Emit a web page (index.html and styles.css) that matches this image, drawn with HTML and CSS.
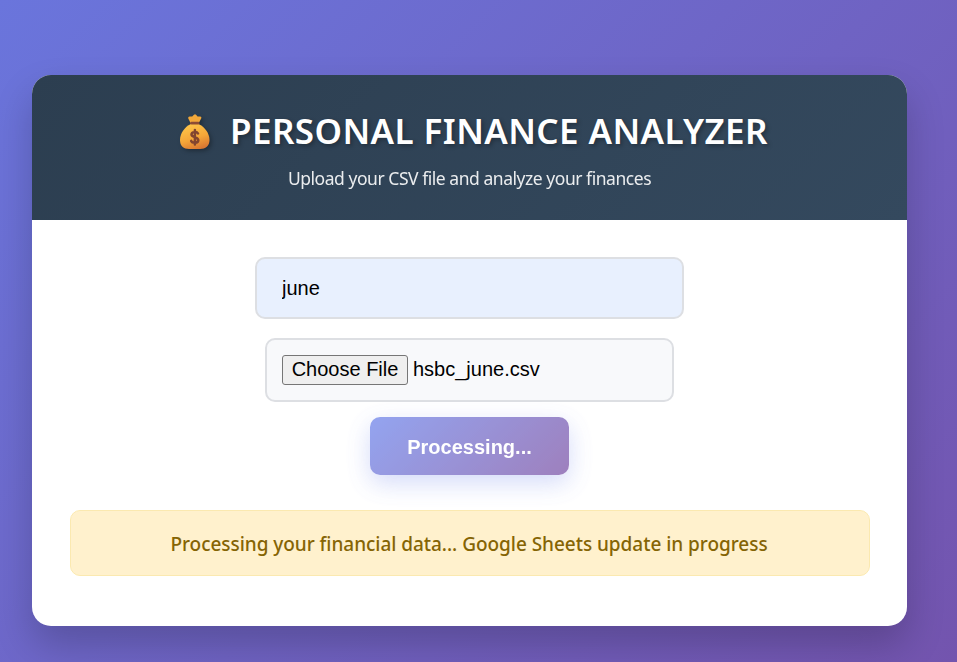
FILE: index.html
```
<!DOCTYPE html>
<html lang="en">
<head>
<meta charset="utf-8">
<title>Personal Finance Analyzer</title>
<link rel="stylesheet" href="styles.css">
</head>
<body>
<main class="card">
  <header class="header">
    <h1 class="title">
      <svg class="bag" viewBox="0 0 34 40" aria-hidden="true">
        <defs>
          <linearGradient id="sack" x1="0.2" y1="0" x2="0.6" y2="1">
            <stop offset="0" stop-color="#ffc84b"/>
            <stop offset="0.6" stop-color="#f5a638"/>
            <stop offset="1" stop-color="#d97832"/>
          </linearGradient>
        </defs>
        <path fill="#f2a83a" d="M12.5 10 L10.2 5.2 Q9.900 3.800 11.600 3.600 L14.2 3.4 L16 1.7 Q17 1 18 1.7 L19.6 3.4 L22.200 3.600 Q23.900 3.900 23.300 5.300 L20.8 10 Z"/>
        <path fill="url(#sack)" d="M12.8 11 H20.5 C27 14 31.5 20.5 31.5 27 C31.5 33 27.5 36 22 36 H11 C5.500 36 2 33 2 27 C2 20.500 6.500 14 12.800 11 Z"/>
        <rect x="12.200" y="8.800" width="9.200" height="2.800" rx="1.400" fill="#8d4c35"/>
        <path fill="none" stroke="#82452f" stroke-width="2.500" stroke-linecap="round" d="M20 20.500 C19 18.500 13.500 18.500 13.500 21.500 C13.500 24.700 20.300 23.600 20.300 27.200 C20.300 30.400 14.200 30.300 13.200 27.900 M16.900 17 V31.500"/>
      </svg>
      <span class="title-text">PERSONAL FINANCE ANALYZER</span>
    </h1>
    <p class="subtitle">Upload your CSV file and analyze your finances</p>
  </header>
  <section class="content">
    <input class="month" type="text" value="june" aria-label="Month">
    <div class="file">
      <button class="choose" type="button">Choose File</button>
      <span>hsbc_june.csv</span>
    </div>
    <button class="submit" type="button">Processing...</button>
    <p class="status">Processing your financial data... Google Sheets update in progress</p>
  </section>
</main>
</body>
</html>
```
FILE: styles.css
```
* {
  box-sizing: border-box;
  margin: 0;
}

body {
  height: 662px;
  padding: 75px 50px 36px 32px;
  overflow: hidden;
  background: linear-gradient(135deg, #6a75dc 0%, #7354ae 100%);
  font-family: "Segoe UI", "Noto Sans", sans-serif;
}

.card {
  width: 875px;
  height: 551px;
  overflow: hidden;
  border-radius: 19px;
  background: #fff;
  box-shadow: 0 19px 38px rgba(0, 0, 0, 0.2);
}

.header {
  height: 145px;
  padding-top: 31px;
  background: linear-gradient(135deg, #2c3e50, #34495e);
  color: #fff;
  white-space: nowrap;
}

.title {
  display: flex;
  align-items: center;
  justify-content: center;
  gap: 18px;
  height: 50px;
  padding-left: 7px;
  font-size: 35px;
  font-weight: 600;
  line-height: 50px;
  letter-spacing: 0.4px;
  text-shadow: 2px 2px 4px rgba(0, 0, 0, 0.3);
}

.bag {
  width: 34px;
  height: 40px;
  margin-top: 4px;
  filter: drop-shadow(2px 2px 2px rgba(0, 0, 0, 0.3));
}

.subtitle {
  margin-top: 9px;
  font-size: 17.5px;
  line-height: 26px;
  letter-spacing: -0.46px;
  text-align: center;
  opacity: 0.9;
}

.content {
  display: flex;
  flex-direction: column;
  align-items: center;
  padding: 37px 38px 0;
  font-family: "Liberation Sans", Arial, sans-serif;
  font-size: 20px;
}

.month {
  width: 429px;
  height: 62px;
  padding: 0 25px;
  border: 2px solid #dddfe3;
  border-radius: 10px;
  background: #e8f0fe;
  color: #000;
  font: inherit;
}

.file {
  display: flex;
  align-items: flex-start;
  gap: 5px;
  width: 409px;
  height: 64px;
  margin-top: 19px;
  padding: 15px;
  border: 2px solid #dddfe3;
  border-radius: 10px;
  background: #f8f9fb;
  color: #000;
  line-height: 29px;
}

.choose {
  width: 126px;
  height: 30px;
  padding: 0 0 1px;
  border: 1px solid #767676;
  border-radius: 3px;
  background: #efefef;
  color: #000;
  font: inherit;
  line-height: 25px;
}

.submit {
  width: 199px;
  height: 58px;
  margin-top: 15px;
  padding: 2px 0 0;
  border: 0;
  border-radius: 10px;
  background: linear-gradient(135deg, #667eea, #764ba2);
  box-shadow: 0 8px 25px rgba(102, 126, 234, 0.4);
  color: #fff;
  font: bold 20px "Liberation Sans", Arial, sans-serif;
  opacity: 0.7;
}

.status {
  align-self: stretch;
  height: 66px;
  margin: 35px -1px 0 0;
  padding-right: 2px;
  border: 1px solid #fbe9b0;
  border-radius: 10px;
  background: #fff1cd;
  color: #856404;
  font-family: "Segoe UI", "Noto Sans", sans-serif;
  font-size: 19px;
  font-weight: 500;
  line-height: 66px;
  letter-spacing: -0.04px;
  text-align: center;
  white-space: nowrap;
}
```
